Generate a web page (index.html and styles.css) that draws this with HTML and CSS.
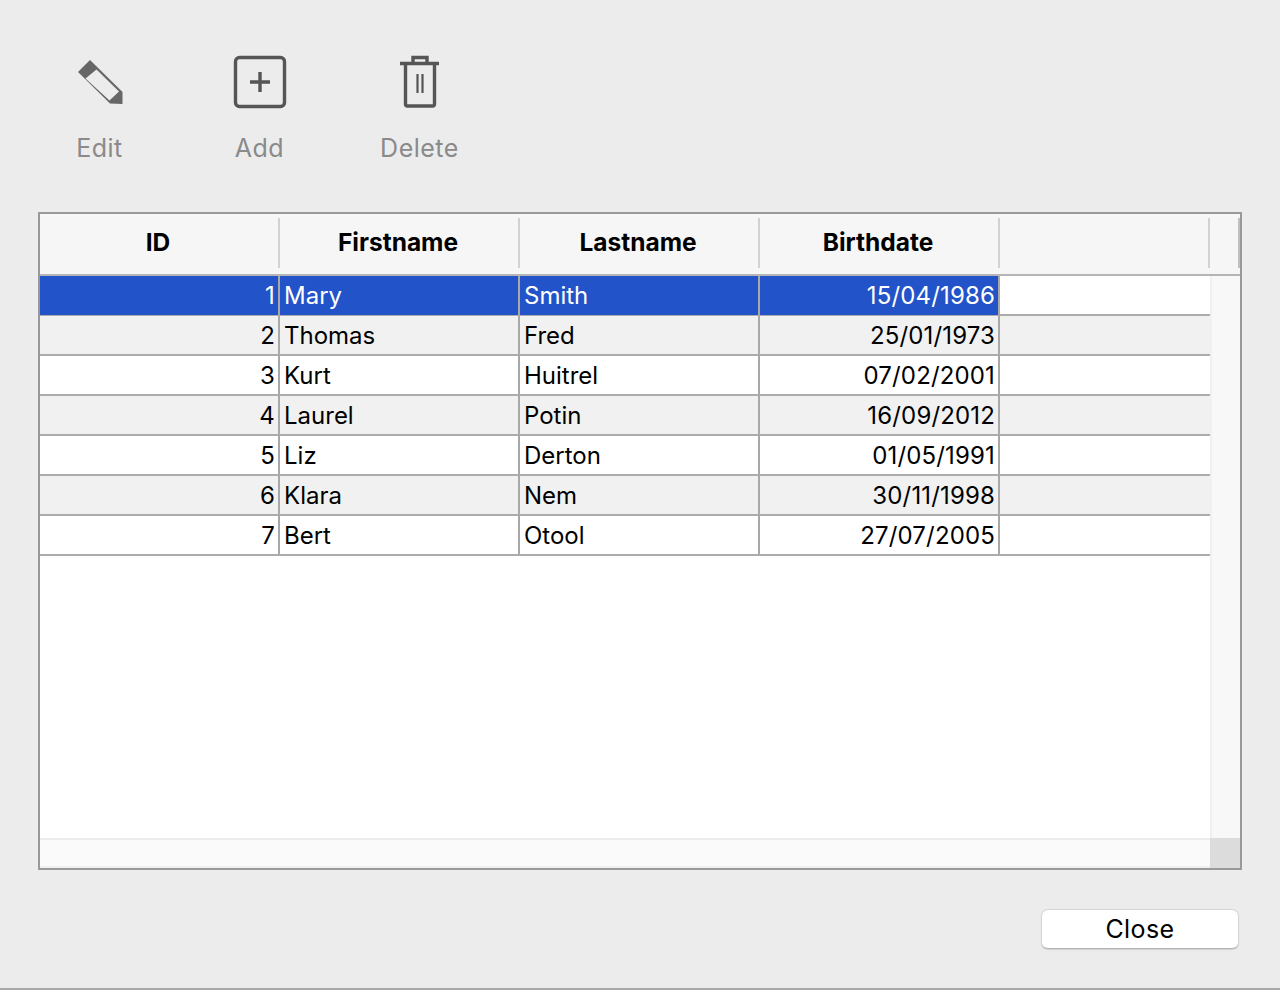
FILE: index.html
```html
<!DOCTYPE html>
<html lang="en">
<head>
    <meta charset="UTF-8">
    <title>Contacts</title>
    <link rel="stylesheet" href="styles.css">
</head>
<body>
    <div class="toolbar">
        <div class="tool">
            <svg class="tool-icon" width="60" height="56" viewBox="0 0 60 56">
                <path d="M8 18 L20 6 L52.5 38 L52.5 50 L40 49.5 Z" fill="#666"/>
                <path d="M26.5 15.5 L15.5 24.5 L39.5 46.5 L49 37.5 Z" fill="#ececec"/>
            </svg>
            <span>Edit</span>
        </div>
        <div class="tool">
            <svg class="tool-icon" width="60" height="56" viewBox="0 0 60 56">
                <rect x="5.5" y="3.5" width="49" height="49" rx="4" fill="none" stroke="#555" stroke-width="3.4"/>
                <path d="M20 28 H40 M30 18 V38" fill="none" stroke="#555" stroke-width="3.4"/>
            </svg>
            <span>Add</span>
        </div>
        <div class="tool">
            <svg class="tool-icon" width="60" height="56" viewBox="0 0 60 56">
                <path d="M10 9.5 H49 M23 8 V3.5 H37 V8" fill="none" stroke="#555" stroke-width="3.4"/>
                <path d="M15.5 10 V50 Q15.5 52 17.5 52 H42.5 Q44.5 52 44.5 50 V10" fill="none" stroke="#555" stroke-width="3.4"/>
                <path d="M27.5 20 V39 M32.5 20 V39" fill="none" stroke="#555" stroke-width="2.2"/>
            </svg>
            <span>Delete</span>
        </div>
    </div>

    <div class="grid-box">
        <div class="grid-header">
            <div class="head-cell">ID</div>
            <div class="head-cell">Firstname</div>
            <div class="head-cell">Lastname</div>
            <div class="head-cell">Birthdate</div>
            <div class="head-cell head-filler"></div>
            <div class="head-cell head-end"></div>
        </div>
        <div class="grid-middle">
            <div class="grid-rows">
                <div class="row selected">
                    <div class="cell num">1</div><div class="cell">Mary</div><div class="cell">Smith</div><div class="cell num">15/04/1986</div><div class="filler"></div>
                </div>
                <div class="row alt">
                    <div class="cell num">2</div><div class="cell">Thomas</div><div class="cell">Fred</div><div class="cell num">25/01/1973</div><div class="filler"></div>
                </div>
                <div class="row">
                    <div class="cell num">3</div><div class="cell">Kurt</div><div class="cell">Huitrel</div><div class="cell num">07/02/2001</div><div class="filler"></div>
                </div>
                <div class="row alt">
                    <div class="cell num">4</div><div class="cell">Laurel</div><div class="cell">Potin</div><div class="cell num">16/09/2012</div><div class="filler"></div>
                </div>
                <div class="row">
                    <div class="cell num">5</div><div class="cell">Liz</div><div class="cell">Derton</div><div class="cell num">01/05/1991</div><div class="filler"></div>
                </div>
                <div class="row alt">
                    <div class="cell num">6</div><div class="cell">Klara</div><div class="cell">Nem</div><div class="cell num">30/11/1998</div><div class="filler"></div>
                </div>
                <div class="row">
                    <div class="cell num">7</div><div class="cell">Bert</div><div class="cell">Otool</div><div class="cell num">27/07/2005</div><div class="filler"></div>
                </div>
            </div>
            <div class="vscroll"></div>
        </div>
        <div class="grid-bottom">
            <div class="hscroll"></div>
            <div class="corner"></div>
        </div>
    </div>

    <div class="footer">
        <button class="close-btn">Close</button>
    </div>
</body>
</html>
```

FILE: styles.css
```css
/* Window */
html, body {
    height: 990px;
}

body {
    margin: 0;
    box-sizing: border-box;
    background-color: #ececec;
    border-bottom: 2px solid #a8a8a8;
    font-family: Inter, "Liberation Sans", sans-serif;
    font-size: 24px;
    color: #000;
    overflow: hidden;
}

/* Toolbar */
.toolbar {
    display: flex;
    padding: 54px 0 0 20px;
    height: 158px;
}

.tool {
    width: 160px;
    display: flex;
    flex-direction: column;
    align-items: center;
    color: #8a8a8a;
    font-size: 25px;
    letter-spacing: 0.5px;
}

.tool-icon {
    display: block;
    margin-bottom: 24px;
}

.tool span {
    line-height: 28px;
    margin-right: 1px;
}

/* Table */
.grid-box {
    width: 1204px;
    height: 658px;
    margin-left: 38px;
    box-sizing: border-box;
    border: 2px solid #999;
    background-color: #fff;
    display: flex;
    flex-direction: column;
}

.grid-header {
    display: flex;
    height: 62px;
    flex: none;
    box-sizing: border-box;
    background-color: #f6f6f6;
    border-bottom: 2px solid #b5b5b5;
    padding: 4px 0 6px;
}

.head-cell {
    flex: none;
    width: 240px;
    box-sizing: border-box;
    border-right: 2px solid #d2d2d2;
    display: flex;
    align-items: center;
    justify-content: center;
    font-size: 24.5px;
    font-weight: 700;
    padding: 0 2px 2px 0;
}

.head-filler {
    width: 210px;
}

.head-end {
    width: 30px;
    border-right-color: #c0c0c0;
}

.grid-middle {
    flex: 1;
    display: flex;
    min-height: 0;
}

.grid-rows {
    width: 1170px;
}

.row {
    display: grid;
    grid-template-columns: repeat(4, 240px) 1fr;
    height: 40px;
    box-sizing: border-box;
    border-bottom: 2px solid #acacac;
}

.row.alt {
    background-color: #f1f1f1;
}

.cell {
    border-right: 2px solid #a8a8a8;
    padding: 0 3px 0 4px;
    line-height: 39px;
    white-space: nowrap;
}

.num {
    text-align: right;
    letter-spacing: 0.15px;
}

.selected .cell {
    background-color: #2253c8;
    color: #fff;
}

/* Scrollbars */
.vscroll {
    flex: 1;
    background-color: #f8f8f8;
    border-left: 2px solid #f0f0f0;
}

.grid-bottom {
    display: flex;
    height: 30px;
    flex: none;
}

.hscroll {
    width: 1170px;
    box-sizing: border-box;
    background-color: #fafafa;
    border-top: 2px solid #ececec;
    border-bottom: 2px solid #f0f0f0;
}

.corner {
    flex: 1;
    background-color: #dcdcdc;
}

/* Footer */
.footer {
    display: flex;
    justify-content: flex-end;
    padding: 39px 41px 0 0;
}

.close-btn {
    width: 198px;
    height: 40px;
    box-sizing: border-box;
    background-color: #fff;
    border: 1px solid #d4d4d4;
    border-bottom-color: #b4b4b4;
    border-radius: 7px;
    box-shadow: 0 1px 1px rgba(0, 0, 0, 0.12);
    font-family: inherit;
    font-size: 25px;
    letter-spacing: 0.4px;
    color: #000;
    padding: 0;
}
```
